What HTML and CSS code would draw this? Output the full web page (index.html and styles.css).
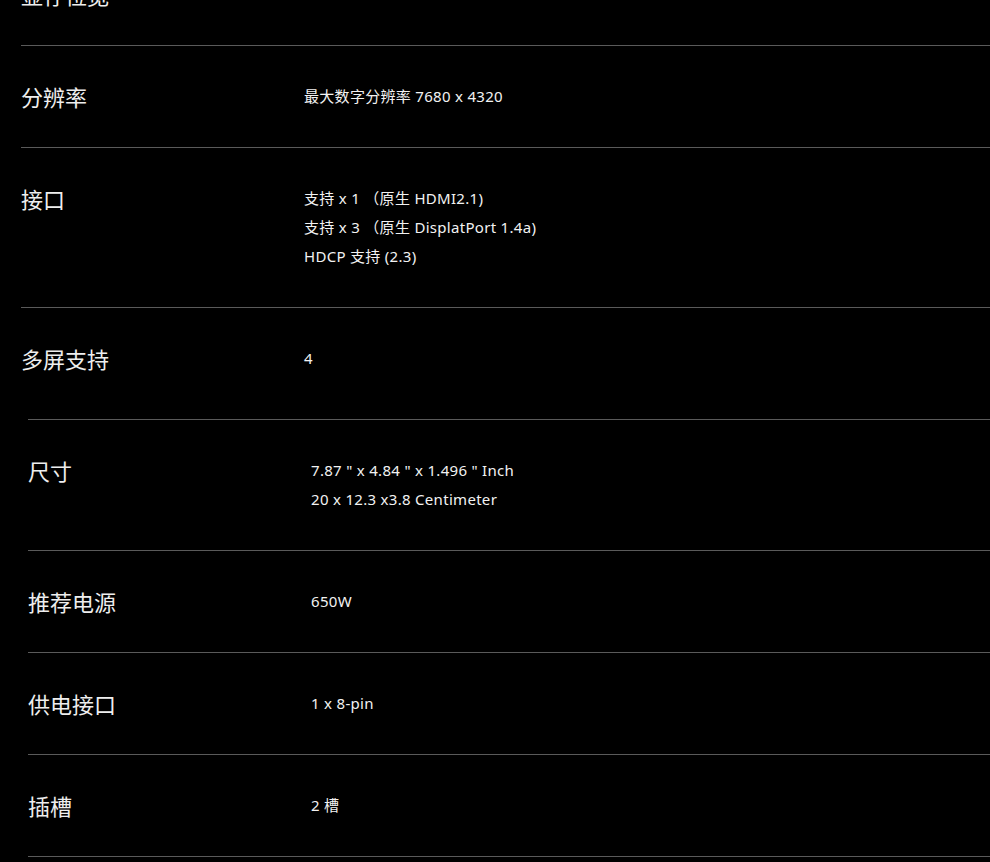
FILE: index.html
```html
<!DOCTYPE html>
<html lang="zh-CN">
<head>
<meta charset="utf-8">
<title>规格</title>
<link rel="stylesheet" href="styles.css">
</head>
<body>
<div class="page">
  <section class="specs first">
    <div class="row">
      <div class="label">显存位宽</div>
      <div class="value"><p>256-bit</p></div>
    </div>
    <div class="row">
      <div class="label">分辨率</div>
      <div class="value"><p>最大数字分辨率 7680 x 4320</p></div>
    </div>
    <div class="row">
      <div class="label">接口</div>
      <div class="value">
        <p>支持 x 1 （原生 HDMI2.1)</p>
        <p>支持 x 3 （原生 DisplatPort 1.4a)</p>
        <p>HDCP 支持 (2.3)</p>
      </div>
    </div>
    <div class="row">
      <div class="label">多屏支持</div>
      <div class="value"><p>4</p></div>
    </div>
  </section>
  <section class="specs second">
    <div class="row">
      <div class="label">尺寸</div>
      <div class="value">
        <p>7.87 " x 4.84 " x 1.496 " Inch</p>
        <p>20 x 12.3 x3.8 Centimeter</p>
      </div>
    </div>
    <div class="row">
      <div class="label">推荐电源</div>
      <div class="value"><p>650W</p></div>
    </div>
    <div class="row">
      <div class="label">供电接口</div>
      <div class="value"><p>1 x 8-pin</p></div>
    </div>
    <div class="row">
      <div class="label">插槽</div>
      <div class="value"><p>2 槽</p></div>
    </div>
  </section>
</div>
</body>
</html>
```
FILE: styles.css
```css
html, body {
  margin: 0;
  padding: 0;
  background: #000;
  overflow: hidden;
}
body {
  font-family: "Noto Sans", "Noto Sans CJK SC", sans-serif;
  color: #fff;
}
.page {
  margin-top: -56px;
}
.specs {
  display: flex;
  flex-direction: column;
}
.specs.first {
  margin-left: 21px;
  padding-bottom: 10px;
}
.specs.second {
  margin-left: 28px;
}
.row {
  display: grid;
  grid-template-columns: 283px 1fr;
  padding: 36px 0;
  border-bottom: 1px solid #5a5a5a;
}
.specs.first .row:last-child {
  border-bottom: none;
}
.specs.second .row:first-child {
  border-top: 1px solid #5a5a5a;
}
.label {
  font-family: "Noto Sans CJK SC", sans-serif;
  font-size: 22px;
  line-height: 29px;
  color: #eeeeee;
}
.value {
  font-size: 15px;
  line-height: 29px;
  letter-spacing: 0.3px;
  color: #f2f2f2;
}
.value p {
  margin: 0;
}
```
